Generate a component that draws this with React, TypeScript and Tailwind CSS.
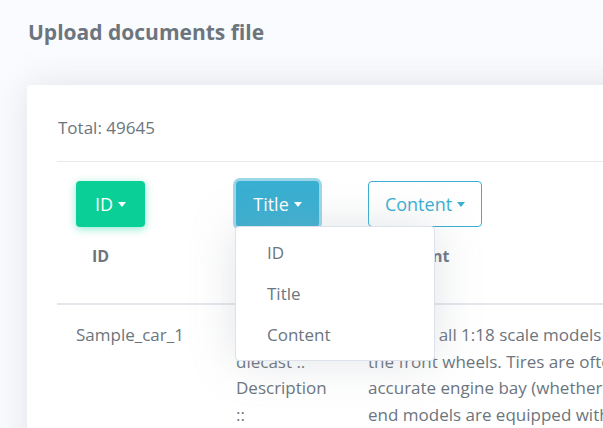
import React from "react";

const Caret = () => (
  <span className="ml-[5px] inline-block h-0 w-0 border-x-[4px] border-t-[5px] border-x-transparent border-t-current align-middle" />
);

export default function App() {
  return (
    <div
      className="h-[428px] w-[603px] overflow-hidden bg-[#fafbfe] text-[#6c757d]"
      style={{ fontFamily: "'Open Sans', Lato, sans-serif" }}
    >
      <div className="pl-[28px] pt-[19px] pb-[40px]">
        <h4 className="text-[21px] font-bold leading-[26px] text-[#6c757d]">Upload documents file</h4>
      </div>
      <div className="ml-[27px] h-[400px] w-[700px] rounded-tl-[4px] bg-white shadow-[0_0_35px_0_rgba(154,161,171,0.25)]">
        <div className="pl-[31px] pt-[31px] pb-[21px] text-[17px] leading-[24px]">Total: 49645</div>
        <div className="pl-[30px]">
          <table className="w-[640px] table-fixed border-collapse border-t border-[#e6e9ee] text-left">
            <colgroup>
              <col className="w-[160px]" />
              <col className="w-[132px]" />
              <col className="w-[348px]" />
            </colgroup>
            <thead>
              <tr className="border-b-2 border-[#e3e7ec]">
                <th className="p-[19px] align-top">
                  <button className="flex h-[46px] w-[69px] items-center justify-center rounded-[4px] bg-[#0acf97] text-[18px] font-normal text-white shadow-[0_2px_8px_0_rgba(10,207,151,0.45)]">
                    ID
                    <Caret />
                  </button>
                  <div className="mt-[17px] mb-[16px] pl-[16px] text-[16px] font-bold leading-[24px] text-[#6c757d]">ID</div>
                </th>
                <th className="p-[19px] align-top">
                  <div className="relative">
                    <button className="flex h-[46px] w-[83px] items-center justify-center rounded-[4px] bg-[#39afd1] text-[18px] font-normal text-white shadow-[0_0_0_3px_rgba(57,175,209,0.5)]">
                      Title
                      <Caret />
                    </button>
                    <div className="absolute top-[45px] left-[-1px] z-10 w-[200px] rounded-[4px] border border-[#dde2ea] bg-white py-[5px] font-normal shadow-[0_0_45px_0_rgba(154,161,171,0.3)]">
                      <div className="flex h-[41px] items-center px-[31px] text-[17px]">ID</div>
                      <div className="flex h-[41px] items-center px-[31px] text-[17px]">Title</div>
                      <div className="flex h-[41px] items-center px-[31px] text-[17px]">Content</div>
                    </div>
                  </div>
                  <div className="mt-[17px] mb-[16px] pl-[16px] text-[16px] font-bold leading-[24px]">Title</div>
                </th>
                <th className="p-[19px] align-top">
                  <button className="flex h-[46px] w-[114px] items-center justify-center rounded-[4px] border border-[#39afd1] bg-white text-[18px] font-normal text-[#39afd1]">
                    Content
                    <Caret />
                  </button>
                  <div className="mt-[17px] mb-[16px] pl-[17px] text-[16px] font-bold leading-[24px]">Content</div>
                </th>
              </tr>
            </thead>
            <tbody className="text-[17px] leading-[26.7px]">
              <tr>
                <td className="px-[19px] pt-[17px] align-top whitespace-nowrap">Sample_car_1</td>
                <td className="px-[19px] pt-[17px] align-top whitespace-nowrap">
                  <div>Title ::</div>
                  <div>diecast ..</div>
                  <div>Description</div>
                  <div>::</div>
                </td>
                <td className="px-[19px] pt-[17px] align-top whitespace-nowrap">
                  <div>Much as all 1:18 scale models of this car,</div>
                  <div>the front wheels. Tires are often made of rubber,</div>
                  <div>accurate engine bay (whether the hood opens),</div>
                  <div>end models are equipped with a detailed interior</div>
                </td>
              </tr>
            </tbody>
          </table>
        </div>
      </div>
    </div>
  );
}
